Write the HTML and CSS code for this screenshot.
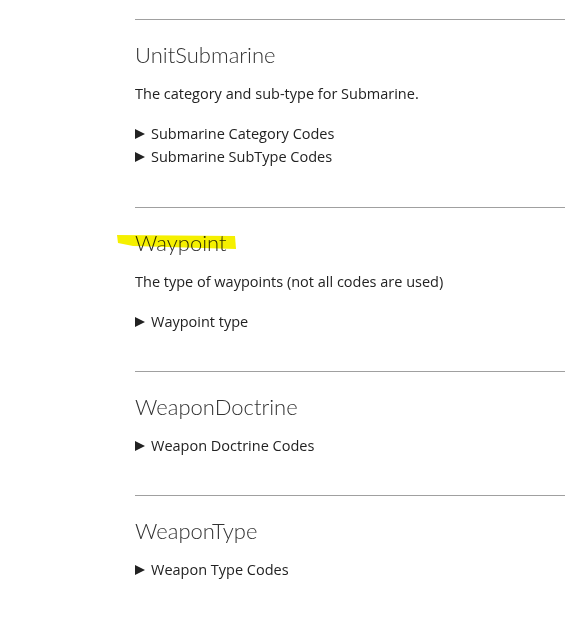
FILE: index.html
```html
<!DOCTYPE html>
<html>
<head>
<meta charset="utf-8">
<link rel="stylesheet" href="styles.css">
</head>
<body>
<main class="doc">
  <section class="entry">
    <hr class="rule">
    <h2 class="title">UnitSubmarine</h2>
    <p class="desc">The category and sub-type for Submarine.</p>
    <details class="codes"><summary>Submarine Category Codes</summary></details>
    <details class="codes"><summary>Submarine SubType Codes</summary></details>
  </section>
  <section class="entry">
    <hr class="rule">
    <h2 class="title marked">Waypoint<svg class="highlight" width="122" height="18" viewBox="0 0 122 18"><polygon points="0,1 118,2 119,15 16,12 1,9" fill="#f5f000"/></svg></h2>
    <p class="desc">The type of waypoints (not all codes are used)</p>
    <details class="codes"><summary>Waypoint type</summary></details>
  </section>
  <section class="entry">
    <hr class="rule">
    <h2 class="title nodesc">WeaponDoctrine</h2>
    <details class="codes"><summary>Weapon Doctrine Codes</summary></details>
  </section>
  <section class="entry">
    <hr class="rule">
    <h2 class="title nodesc">WeaponType</h2>
    <details class="codes"><summary>Weapon Type Codes</summary></details>
  </section>
</main>
</body>
</html>
```
FILE: styles.css
```css
html, body {
  margin: 0;
  padding: 0;
  background: #ffffff;
}
body {
  font-family: "Open Sans", "Noto Sans", sans-serif;
  color: #222222;
  font-size: 14.5px;
}
.doc {
  padding: 19px 0 0 135px;
}
.entry {
  display: flex;
  flex-direction: column;
  padding-bottom: 38px;
}
.entry:first-child {
  padding-bottom: 39px;
}
.rule {
  margin: 0;
  border: 0;
  border-top: 1px solid #a0a0a0;
  height: 0;
}
.title {
  margin: 19px 0 0 0;
  font-family: "Lato", "Open Sans", sans-serif;
  font-size: 22px;
  font-weight: 300;
  line-height: 32px;
  color: #333333;
  position: relative;
}
.title.nodesc {
  margin-bottom: 11px;
}
.marked .highlight {
  position: absolute;
  left: -18px;
  top: 7px;
  mix-blend-mode: multiply;
}
.desc {
  margin: 12px 0 17px 0;
  line-height: 22px;
}
.codes {
  line-height: 23px;
}
.codes summary {
  list-style: none;
  display: flex;
  align-items: center;
  cursor: pointer;
}
.codes summary::-webkit-details-marker {
  display: none;
}
.codes summary::before {
  content: "";
  width: 0;
  height: 0;
  border-left: 10px solid #222222;
  border-top: 5px solid transparent;
  border-bottom: 5px solid transparent;
  margin-right: 6px;
}
```
